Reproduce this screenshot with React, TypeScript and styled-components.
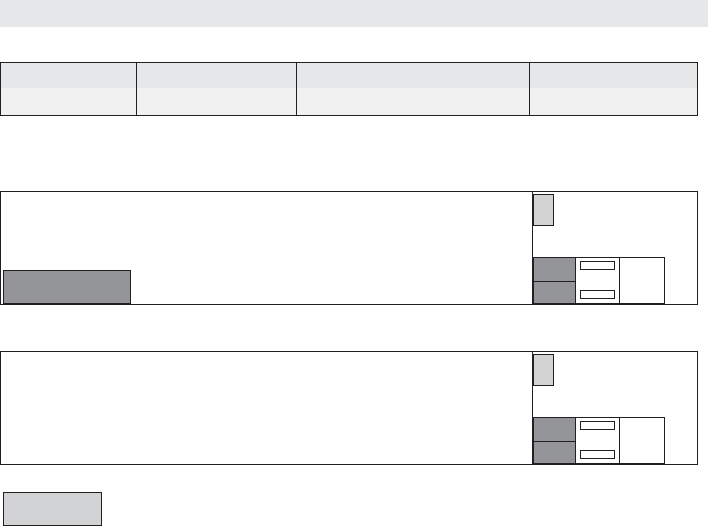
import React from 'react';
import styled, { createGlobalStyle } from 'styled-components';

const GlobalStyle = createGlobalStyle`
  body {
    margin: 0;
    background: #fff;
    font-family: "Liberation Sans", Arial, sans-serif;
  }
`;

const Page = styled.div`
  width: 709px;
  height: 527px;
  overflow: hidden;
`;

const TopBar = styled.div`
  height: 27px;
  width: 708px;
  background: #e6e7e8;
`;

const Table = styled.div`
  margin-top: 35px;
  width: 698px;
  box-sizing: border-box;
  border: 1.5px solid #231f20;
  display: grid;
  grid-template-columns: 136px 160px 233px 1fr;
  grid-template-rows: 25px 27px;
`;

const Cell = styled.div<{ $head?: boolean; $last?: boolean }>`
  background: ${p => (p.$head ? '#e6e7e8' : '#f1f1f2')};
  border-right: ${p => (p.$last ? 'none' : '1.5px solid #231f20')};
`;

const Panel = styled.div<{ $top: number }>`
  margin-top: ${p => p.$top}px;
  width: 698px;
  height: 114px;
  box-sizing: border-box;
  border: 1.5px solid #231f20;
  display: flex;
`;

const Main = styled.div`
  flex: 1;
  border-right: 1.5px solid #231f20;
  display: flex;
  align-items: flex-end;
  padding: 0 0 0.5px 2px;
`;

const Side = styled.div`
  width: 164px;
  display: flex;
  flex-direction: column;
  justify-content: space-between;
  padding: 1.5px 0 0 0.5px;
`;

const Button = styled.div<{ $dark?: boolean; $width: number }>`
  width: ${p => p.$width}px;
  height: 34px;
  box-sizing: border-box;
  border: 1px solid #231f20;
  background: ${p => (p.$dark ? '#939598' : '#d1d3d4')};
`;

const Swatch = styled.div`
  width: 21px;
  height: 32px;
  box-sizing: border-box;
  border: 1px solid #231f20;
  background: #d1d3d4;
`;

const MiniGrid = styled.div`
  width: 132px;
  height: 47px;
  box-sizing: border-box;
  border: 1px solid #231f20;
  display: grid;
  grid-template-columns: 42px 44px 1fr;
  grid-template-rows: 1fr 1fr;
`;

const DarkCell = styled.div<{ $bottom?: boolean }>`
  background: #939598;
  border-right: 1px solid #231f20;
  border-top: ${p => (p.$bottom ? '1px solid #231f20' : 'none')};
`;

const InputCol = styled.div`
  grid-column: 2;
  grid-row: 1 / span 2;
  border-right: 1px solid #231f20;
  display: flex;
  flex-direction: column;
  justify-content: space-between;
  align-items: center;
  padding: 3px 0 4px;
`;

const MiniInput = styled.div`
  width: 35px;
  height: 9px;
  box-sizing: border-box;
  border: 1px solid #231f20;
  background: #fff;
`;

const EmptyCol = styled.div`
  grid-column: 3;
  grid-row: 1 / span 2;
`;

const Footer = styled.div`
  margin-top: 27px;
  padding-left: 3px;
`;

const Control = () => (
  <MiniGrid>
    <DarkCell style={{ gridColumn: 1, gridRow: 1 }} />
    <DarkCell $bottom style={{ gridColumn: 1, gridRow: 2 }} />
    <InputCol>
      <MiniInput />
      <MiniInput />
    </InputCol>
    <EmptyCol />
  </MiniGrid>
);

const Section = ({ top, withButton }: { top: number; withButton?: boolean }) => (
  <Panel $top={top}>
    <Main>{withButton && <Button $dark $width={128} />}</Main>
    <Side>
      <Swatch />
      <Control />
    </Side>
  </Panel>
);

export default function App() {
  return (
    <Page>
      <GlobalStyle />
      <TopBar />
      <Table>
        <Cell $head />
        <Cell $head />
        <Cell $head />
        <Cell $head $last />
        <Cell />
        <Cell />
        <Cell />
        <Cell $last />
      </Table>
      <Section top={75} withButton />
      <Section top={46} />
      <Footer>
        <Button $width={99} />
      </Footer>
    </Page>
  );
}
